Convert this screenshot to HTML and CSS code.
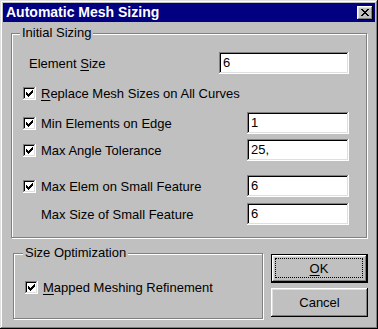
FILE: index.html
```html
<!DOCTYPE html>
<html lang="en">
  <head>
    <meta charset="UTF-8" />
    <link rel="stylesheet" href="styles.css">
    <title>Automatic Mesh Sizing</title>
  </head>
  <body>
    <div class="window">
      <div class="titlebar">
        <span class="title">Automatic Mesh Sizing</span>
        <div class="close">
          <svg width="8" height="7" viewBox="0 0 8 7" shape-rendering="crispEdges">
            <path d="M0 0h2v1h-2zM6 0h2v1h-2zM1 1h2v1h-2zM5 1h2v1h-2zM2 2h4v1h-4zM3 3h2v1h-2zM2 4h4v1h-4zM1 5h2v1h-2zM5 5h2v1h-2zM0 6h2v1h-2zM6 6h2v1h-2z" fill="#000"/>
          </svg>
        </div>
      </div>

      <div class="content">
        <div class="group initial">
          <div class="group-title">Initial Sizing</div>

          <div class="row r1">
            <span class="text indent-s">Element <u>S</u>ize</span>
            <div class="field wide">6</div>
          </div>

          <div class="row r2">
            <span class="check"><svg width="7" height="7" viewBox="0 0 7 7" shape-rendering="crispEdges"><path d="M6 0h1v1h-1zM5 1h2v1h-2zM0 2h1v1h-1zM4 2h3v1h-3zM0 3h2v1h-2zM3 3h3v1h-3zM0 4h5v1h-5zM1 5h3v1h-3zM2 6h1v1h-1z"/></svg></span>
            <span class="text"><u>R</u>eplace Mesh Sizes on All Curves</span>
          </div>

          <div class="row r3">
            <span class="check"><svg width="7" height="7" viewBox="0 0 7 7" shape-rendering="crispEdges"><path d="M6 0h1v1h-1zM5 1h2v1h-2zM0 2h1v1h-1zM4 2h3v1h-3zM0 3h2v1h-2zM3 3h3v1h-3zM0 4h5v1h-5zM1 5h3v1h-3zM2 6h1v1h-1z"/></svg></span>
            <span class="text">Min Elements on Edge</span>
            <div class="field">1</div>
          </div>

          <div class="row r4">
            <span class="check"><svg width="7" height="7" viewBox="0 0 7 7" shape-rendering="crispEdges"><path d="M6 0h1v1h-1zM5 1h2v1h-2zM0 2h1v1h-1zM4 2h3v1h-3zM0 3h2v1h-2zM3 3h3v1h-3zM0 4h5v1h-5zM1 5h3v1h-3zM2 6h1v1h-1z"/></svg></span>
            <span class="text">Max Angle Tolerance</span>
            <div class="field">25,</div>
          </div>

          <div class="row r5">
            <span class="check"><svg width="7" height="7" viewBox="0 0 7 7" shape-rendering="crispEdges"><path d="M6 0h1v1h-1zM5 1h2v1h-2zM0 2h1v1h-1zM4 2h3v1h-3zM0 3h2v1h-2zM3 3h3v1h-3zM0 4h5v1h-5zM1 5h3v1h-3zM2 6h1v1h-1z"/></svg></span>
            <span class="text">Max Elem on Small Feature</span>
            <div class="field">6</div>
          </div>

          <div class="row r6">
            <span class="text indent-l">Max Size of Small Feature</span>
            <div class="field">6</div>
          </div>
        </div>

        <div class="bottom">
          <div class="group opt">
            <div class="group-title">Size Optimization</div>
            <div class="row r7">
              <span class="check"><svg width="7" height="7" viewBox="0 0 7 7" shape-rendering="crispEdges"><path d="M6 0h1v1h-1zM5 1h2v1h-2zM0 2h1v1h-1zM4 2h3v1h-3zM0 3h2v1h-2zM3 3h3v1h-3zM0 4h5v1h-5zM1 5h3v1h-3zM2 6h1v1h-1z"/></svg></span>
              <span class="text"><u>M</u>apped Meshing Refinement</span>
            </div>
          </div>

          <div class="buttons">
            <div class="btn default"><span class="focus"><u>O</u>K</span></div>
            <div class="btn">Cancel</div>
          </div>
        </div>
      </div>
    </div>
  </body>
</html>
```

FILE: styles.css
```css
* {
  margin: 0;
  padding: 0;
  box-sizing: border-box;
}
body {
  background: #c0c0c0;
  font-family: "Liberation Sans", Arial, sans-serif;
  font-size: 13px;
  color: #000;
}
u {
  text-decoration: underline;
  text-underline-offset: 2px;
}

.window {
  width: 378px;
  height: 329px;
  padding: 3px;
  background: #c0c0c0;
  box-shadow: inset -1px -1px #000, inset 1px 1px #dfdfdf,
    inset -2px -2px #808080, inset 2px 2px #fff;
}
.titlebar {
  height: 19px;
  background: #000080;
  display: flex;
  align-items: center;
  justify-content: space-between;
  padding: 0 2px 0 3px;
}
.title {
  color: #fff;
  font-weight: bold;
  font-size: 14px;
  line-height: 19px;
}
.close {
  width: 16px;
  height: 14px;
  background: #c0c0c0;
  display: flex;
  align-items: center;
  justify-content: center;
  padding: 0 1px 1px 0;
  box-shadow: inset -1px -1px #000, inset 1px 1px #fff,
    inset -2px -2px #808080, inset 2px 2px #dfdfdf;
}

.content {
  padding-top: 11px;
}

.group {
  border: 1px solid #808080;
  box-shadow: inset 1px 1px #fff, 1px 1px #fff;
}
.group-title {
  width: max-content;
  height: 16px;
  line-height: 16px;
  margin: -9px 0 0 8px;
  padding: 0 2px;
  background: #c0c0c0;
}
.initial {
  margin-left: 8px;
  width: 356px;
  height: 205px;
}

.row {
  display: flex;
  align-items: center;
  height: 22px;
  padding: 0 17px 0 11px;
}
.r1 { margin-top: 11px; }
.r2 { margin-top: 8px; }
.r3 { margin-top: 8px; }
.r4 { margin-top: 5px; }
.r5 { margin-top: 14px; }
.r6 { margin-top: 6px; }
.r7 { margin-top: 15px; }

.indent-s { margin-left: 6px; }
.indent-l { margin-left: 18px; }

.check {
  width: 13px;
  height: 13px;
  flex: none;
  margin-right: 5px;
  background: #fff;
  display: flex;
  align-items: center;
  justify-content: center;
  box-shadow: inset -1px -1px #fff, inset 1px 1px #808080,
    inset -2px -2px #dfdfdf, inset 2px 2px #000;
}

.field {
  margin-left: auto;
  width: 102px;
  height: 22px;
  background: #fff;
  padding: 0 4px;
  line-height: 22px;
  box-shadow: inset -1px -1px #fff, inset 1px 1px #808080,
    inset -2px -2px #dfdfdf, inset 2px 2px #000;
}
.field.wide {
  width: 130px;
}

.bottom {
  display: flex;
  margin-top: 15px;
}
.opt {
  margin-left: 10px;
  width: 250px;
  height: 66px;
}
.opt .group-title {
  margin-left: 9px;
}

.buttons {
  margin-left: 8px;
  padding-top: 1px;
  display: flex;
  flex-direction: column;
  gap: 5px;
}
.btn {
  width: 97px;
  height: 29px;
  display: flex;
  align-items: center;
  justify-content: center;
  box-shadow: inset -1px -1px #000, inset 1px 1px #fff,
    inset -2px -2px #808080, inset 2px 2px #dfdfdf;
}
.btn.default {
  border: 1px solid #000;
  padding: 3px 4px 4px 3px;
}
.focus {
  flex: 1;
  align-self: stretch;
  border: 1px dotted #000;
  display: flex;
  align-items: center;
  justify-content: center;
}
```
